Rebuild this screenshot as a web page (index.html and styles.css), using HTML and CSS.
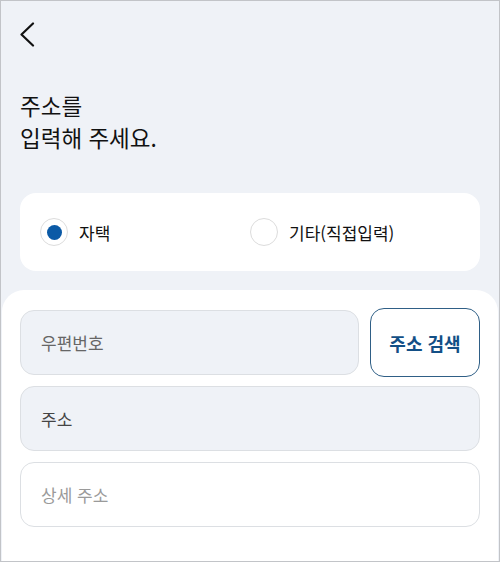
FILE: index.html
```html
<!DOCTYPE html>
<html lang="ko">
<head>
<meta charset="utf-8">
<link rel="stylesheet" href="styles.css">
</head>
<body>
<div class="frame">
  <header class="top">
    <button class="back" aria-label="뒤로">
      <svg width="16" height="25" viewBox="0 0 16 25"><path d="M14 1.5 L2.5 12.5 L14 23.5" fill="none" stroke="#111" stroke-width="2.2" stroke-linecap="round" stroke-linejoin="round"/></svg>
    </button>
  </header>
  <h1 class="title">주소를<br>입력해 주세요.</h1>
  <div class="card">
    <label class="radio"><span class="circle on"></span><span class="lbl">자택</span></label>
    <label class="radio"><span class="circle"></span><span class="lbl">기타(직접입력)</span></label>
  </div>
  <section class="sheet">
    <div class="row">
      <div class="field filled muted">우편번호</div>
      <button class="search">주소 검색</button>
    </div>
    <div class="field filled dark">주소</div>
    <div class="field light">상세 주소</div>
  </section>
</div>
</body>
</html>
```
FILE: styles.css
```css
* { box-sizing: border-box; }
html, body { margin: 0; padding: 0; }
body { font-family: "Noto Sans CJK KR", "Noto Sans", sans-serif; }
.frame {
  width: 500px; height: 562px;
  border: 1px solid #c2c4c8;
  background: #eff2f7;
  display: flex; flex-direction: column;
  overflow: hidden;
}
.top { padding: 21px 0 0 17px; height: 48px; }
.back { background: none; border: 0; padding: 0; display: block; width: 18px; height: 26px; }
.title {
  margin: 40px 0 0 19px;
  font-size: 22.5px; line-height: 32px; font-weight: 400; color: #111;
}
.card {
  margin: 40px 19px 0 19px;
  height: 78px;
  background: #fff; border-radius: 16px;
  display: grid; grid-template-columns: 210px 1fr;
  align-items: center;
  padding: 0 0 0 20px;
}
.radio { display: flex; align-items: center; gap: 11px; }
.circle {
  width: 28px; height: 28px; border-radius: 50%;
  border: 1px solid #dcdcdc; background: #fff;
  display: flex; align-items: center; justify-content: center;
}
.circle.on::after { content: ""; width: 15px; height: 15px; border-radius: 50%; background: #0b5aa6; }
.lbl { font-size: 17px; color: #111; }
.sheet {
  flex: 1;
  margin: 19px 1px 0 1px;
  background: #fff;
  border-radius: 22px 22px 0 0;
  padding: 18px 18px 0 18px;
  display: flex; flex-direction: column;
}
.row { display: flex; align-items: center; gap: 11px; height: 69px; margin-bottom: 9px; }
.row .field { flex: 1; margin-bottom: 0; }
.field {
  height: 65px; border-radius: 14px;
  border: 1px solid #dcdfe3;
  display: flex; align-items: center;
  padding-left: 20px;
  font-size: 17px;
  margin-bottom: 11px;
}
.filled { background: #eff2f7; }
.muted { color: #666; }
.dark { color: #444; }
.light { background: #fff; color: #9a9a9a; }
.search {
  width: 110px; height: 69px;
  background: #fff; border: 1.3px solid #2f5f86; border-radius: 14px;
  font-family: inherit; font-size: 18px; font-weight: 700; color: #134f86;
  padding: 0;
}
```
